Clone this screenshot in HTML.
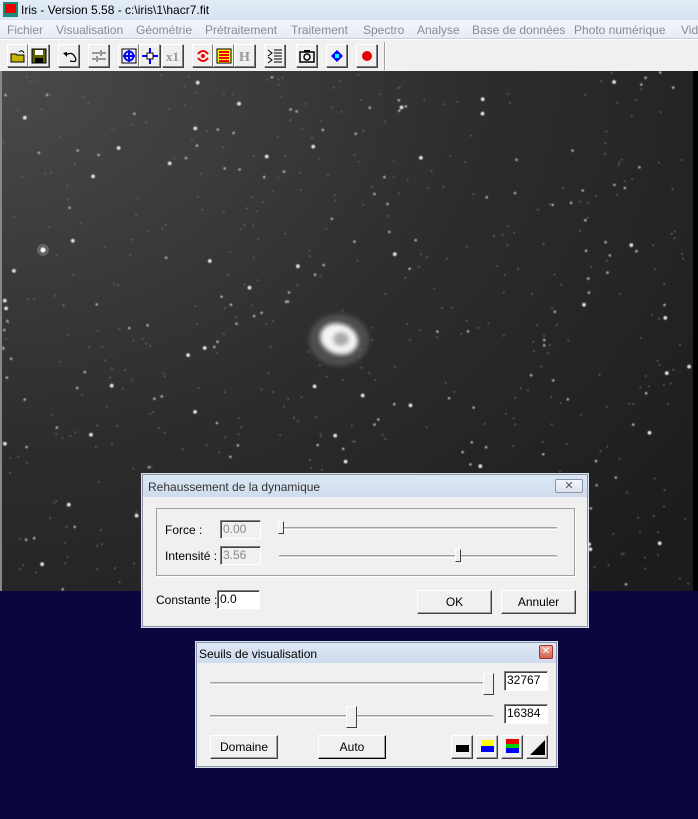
<!DOCTYPE html>
<html><head><meta charset="utf-8"><style>
*{box-sizing:border-box;margin:0;padding:0}
body{width:698px;height:819px;overflow:hidden;background:#0b0540;font-family:"Liberation Sans",sans-serif;font-size:12px;position:relative}
.abs{position:absolute}
#title{left:0;top:0;width:698px;height:20px;background:linear-gradient(#e3ecf7,#d6e3f2);}
#title span{position:absolute;left:21px;top:3px;font-size:12px;color:#000}
#menu{left:0;top:20px;width:698px;height:19px;background:linear-gradient(#f3f6fb,#e6ecf5);border-bottom:1px solid #c8ccd4}
#menu span{position:absolute;top:3px;color:#8a8a96;font-size:12px;white-space:nowrap}
#tool{left:0;top:39px;width:698px;height:32px;background:#f0f0f0;border-top:1px solid #fff}
.tb{position:absolute;top:4px;width:21px;height:23px;background:#f0f0f0;border:1px solid;border-color:#fff #808080 #808080 #fff;box-shadow:1px 1px 0 #404040}
.tb svg{position:absolute;left:2px;top:3px}
#img{left:2px;top:71px;width:691px;height:520px;background:radial-gradient(ellipse 900px 700px at 0 0,#4a4a4a,#2c2c2c 55%,#1c1c1c);overflow:hidden}
.dlg{background:#f0f0f0;border:1px solid #8b95a5;box-shadow:0 0 0 1px #d8e2ee}
.dt{position:absolute;left:0;top:0;right:0;height:22px;background:linear-gradient(#dde8f5,#cfdced)}
.in{position:absolute;background:#fff;border:1px solid;border-color:#808080 #fff #fff #808080;box-shadow:inset 1px 1px 0 #404040;font-size:12px;padding:1px 2px}
.dis{background:#f0f0f0;color:#8a8a8a}
.btn{position:absolute;background:#f0f0f0;border:1px solid;border-color:#fff #404040 #404040 #fff;box-shadow:inset -1px -1px 0 #a0a0a0;text-align:center;font-size:12px}
.trk{position:absolute;height:3px;border-top:1px solid #a0a0a0;border-bottom:1px solid #fff;background:#d0d0d0}
.th{position:absolute;background:#f0f0f0;border:1px solid;border-color:#fff #404040 #404040 #fff}
.lbl{position:absolute;font-size:12px;color:#000}
</style></head><body>
<div id="title" class="abs"><div class="abs" style="left:3px;top:2px;width:15px;height:15px;background:#1a8a7a;"><div class="abs" style="left:2px;top:2px;width:11px;height:9px;background:#e00"></div></div><span>Iris - Version 5.58 - c:\iris\1\hacr7.fit</span></div>
<div id="menu" class="abs">
<span style="left:7px">Fichier</span><span style="left:56px">Visualisation</span><span style="left:136px">Géométrie</span><span style="left:205px">Prétraitement</span><span style="left:291px">Traitement</span><span style="left:363px">Spectro</span><span style="left:417px">Analyse</span><span style="left:472px">Base de données</span><span style="left:574px">Photo numérique</span><span style="left:681px">Vid</span>
</div>
<div id="tool" class="abs">
<div class="tb" style="left:7px"><svg width="16" height="16"><path d="M1 6h5l1 1h7v7H1z" fill="#c8b400" stroke="#000"/><path d="M9 4q3-3 5 1" stroke="#000" fill="none"/></svg></div>
<div class="tb" style="left:28px"><svg width="16" height="16"><rect x="1" y="1" width="14" height="14" fill="#606000" stroke="#000"/><rect x="4" y="2" width="8" height="5" fill="#fff"/><rect x="4" y="10" width="8" height="5" fill="#000"/></svg></div>
<div class="tb" style="left:58px"><svg width="16" height="16"><path d="M5 7q6-4 9 2t-5 4" stroke="#000" fill="none" stroke-width="1.3"/><path d="M2 5l4 4v-5z" fill="#000"/></svg></div>
<div class="tb" style="left:88px"><svg width="16" height="16"><path d="M1 5h14M1 11h14M10 2v6M6 8v6" stroke="#999" stroke-width="2"/></svg></div>
<div class="tb" style="left:118px"><svg width="16" height="16"><rect x="1" y="1" width="14" height="14" fill="none" stroke="#000"/><circle cx="8" cy="8" r="4.5" fill="none" stroke="#00f" stroke-width="2"/><path d="M8 2v12M2 8h12" stroke="#00f" stroke-width="2"/></svg></div>
<div class="tb" style="left:139px"><svg width="16" height="16"><path d="M8 0v16M0 8h16" stroke="#00f" stroke-width="2"/><rect x="5" y="5" width="6" height="6" fill="#fff" stroke="#000"/></svg></div>
<div class="tb" style="left:162px"><svg width="16" height="16"><text x="1" y="13" font-family="Liberation Serif" font-weight="bold" font-size="13" fill="#999">x1</text></svg></div>
<div class="tb" style="left:192px"><svg width="16" height="16"><path d="M3 6q5-6 10 0M13 10q-5 6-10 0" stroke="#e00" fill="none" stroke-width="2"/><circle cx="8" cy="8" r="2" fill="#e00"/></svg></div>
<div class="tb" style="left:213px"><svg width="16" height="16"><rect x="1" y="1" width="14" height="14" fill="#ff0" stroke="#000"/><path d="M3 4h10M3 7h10M3 10h10M3 13h10" stroke="#e00" stroke-width="2"/></svg></div>
<div class="tb" style="left:234px"><svg width="16" height="16"><text x="2" y="13" font-family="Liberation Serif" font-weight="bold" font-size="14" fill="#999">H</text></svg></div>
<div class="tb" style="left:264px"><svg width="16" height="16"><path d="M1 2l4 3-4 3M1 9l4 3-4 3M7 2h8M7 5h8M7 8h8M7 11h8M7 14h8" stroke="#000" fill="none"/></svg></div>
<div class="tb" style="left:296px"><svg width="16" height="16"><rect x="1" y="4" width="14" height="10" fill="none" stroke="#000" stroke-width="1.5"/><circle cx="8" cy="9" r="3" fill="none" stroke="#000" stroke-width="1.5"/><rect x="5" y="2" width="6" height="2" fill="#000"/></svg></div>
<div class="tb" style="left:326px"><svg width="16" height="16"><path d="M8 2l6 6-6 6-6-6z" fill="#00f"/><rect x="6" y="6" width="4" height="4" fill="#0ff"/></svg></div>
<div class="tb" style="left:356px"><svg width="16" height="16"><circle cx="8" cy="8" r="5" fill="#e00"/></svg></div>
<div class="abs" style="left:384px;top:2px;width:2px;height:28px;border-left:1px solid #a0a0a0;border-right:1px solid #fff"></div>
</div>
<div class="abs" style="left:0;top:71px;width:2px;height:520px;background:#888"></div>
<div id="img" class="abs"><svg id="st" width="691" height="520"><defs><filter id="b"><feGaussianBlur stdDeviation="0.6"/></filter><filter id="b2"><feGaussianBlur stdDeviation="2"/></filter></defs><g id="stars" filter="url(#b)"></g><g filter="url(#b2)"><ellipse cx="337" cy="269" rx="30" ry="26" fill="#777" opacity=".45"/><ellipse cx="337" cy="268" rx="19" ry="15" fill="#f4f4f4" transform="rotate(18 337 268)"/><ellipse cx="339" cy="268" rx="8" ry="7" fill="#aaa"/></g><circle cx="41" cy="179" r="2.5" fill="#fff" filter="url(#b)"/><circle cx="41" cy="179" r="6" fill="#fff" opacity=".2"/></svg></div>
<div class="abs" style="left:693px;top:71px;width:5px;height:520px;background:#000"></div>

<div class="abs dlg" style="left:142px;top:474px;width:446px;height:153px">
<div class="dt"><span class="lbl" style="left:5px;top:5px;color:#333">Rehaussement de la dynamique</span>
<div class="abs" style="right:4px;top:4px;width:28px;height:14px;border:1px solid #8b95a5;border-radius:2px;background:linear-gradient(#f2f5fa,#dce3ec);text-align:center;font-size:11px;line-height:12px;color:#555">✕</div></div>
<div class="abs" style="left:13px;top:33px;width:419px;height:68px;border:1px solid #a0a0a0;box-shadow:1px 1px 0 #fff"></div>
<span class="lbl" style="left:22px;top:48px">Force :</span>
<div class="in dis" style="left:77px;top:45px;width:41px;height:19px">0.00</div>
<div class="trk" style="left:136px;top:52px;width:278px"></div>
<div class="th" style="left:135px;top:46px;width:6px;height:13px"></div>
<span class="lbl" style="left:22px;top:74px">Intensité :</span>
<div class="in dis" style="left:77px;top:71px;width:41px;height:19px">3.56</div>
<div class="trk" style="left:136px;top:80px;width:278px"></div>
<div class="th" style="left:312px;top:74px;width:6px;height:13px"></div>
<span class="lbl" style="left:13px;top:118px">Constante :</span>
<div class="in" style="left:74px;top:115px;width:43px;height:19px">0.0</div>
<div class="btn" style="left:274px;top:115px;width:75px;height:24px;line-height:22px">OK</div>
<div class="btn" style="left:358px;top:115px;width:75px;height:24px;line-height:22px">Annuler</div>
</div>

<div class="abs dlg" style="left:196px;top:642px;width:361px;height:125px">
<div class="dt" style="height:20px"><span class="lbl" style="left:2px;top:4px">Seuils de visualisation</span>
<div class="abs" style="left:342px;top:2px;width:14px;height:14px;border:1px solid #a03030;border-radius:2px;background:linear-gradient(#f0b0a0,#d06050);color:#fff;font-size:10px;line-height:12px;text-align:center">✕</div></div>
<div class="trk" style="left:13px;top:39px;width:283px"></div>
<div class="th" style="left:286px;top:30px;width:11px;height:22px"></div>
<div class="in" style="left:307px;top:28px;width:44px;height:20px">32767</div>
<div class="trk" style="left:13px;top:72px;width:283px"></div>
<div class="th" style="left:149px;top:63px;width:11px;height:22px"></div>
<div class="in" style="left:307px;top:61px;width:44px;height:20px">16384</div>
<div class="btn" style="left:13px;top:92px;width:68px;height:24px;line-height:22px">Domaine</div>
<div class="btn" style="left:121px;top:92px;width:68px;height:24px;line-height:22px;border-color:#fff #000 #000 #fff">Auto</div>
<div class="btn" style="left:254px;top:92px;width:22px;height:24px"><div class="abs" style="left:4px;top:9px;width:13px;height:7px;background:#000"></div></div>
<div class="btn" style="left:279px;top:92px;width:22px;height:24px"><div class="abs" style="left:4px;top:4px;width:13px;height:6px;background:#ff0"></div><div class="abs" style="left:4px;top:10px;width:13px;height:6px;background:#00f"></div></div>
<div class="btn" style="left:304px;top:92px;width:22px;height:24px"><div class="abs" style="left:4px;top:3px;width:13px;height:5px;background:#e00"></div><div class="abs" style="left:4px;top:8px;width:13px;height:4px;background:#0c0"></div><div class="abs" style="left:4px;top:12px;width:13px;height:5px;background:#00f"></div></div>
<div class="btn" style="left:329px;top:92px;width:22px;height:24px"><svg class="abs" style="left:3px;top:3px" width="16" height="16"><path d="M15 1v15H0z" fill="#000"/></svg></div>
</div>
<script>
var s=12345;function r(){s=(s*16807)%2147483647;return s/2147483647;}
var g=document.getElementById('stars'),h='';
for(var i=0;i<650;i++){var x=r()*691,y=r()*520,q=r();var rad=q<0.7?0.9:(q<0.93?1.3:1.9);var c=q<0.7?'#6a6a6a':(q<0.93?'#aaa':'#e0e0e0');h+='<circle cx="'+x.toFixed(1)+'" cy="'+y.toFixed(1)+'" r="'+rad+'" fill="'+c+'"/>';}
g.innerHTML=h;
</script>
</body></html>
